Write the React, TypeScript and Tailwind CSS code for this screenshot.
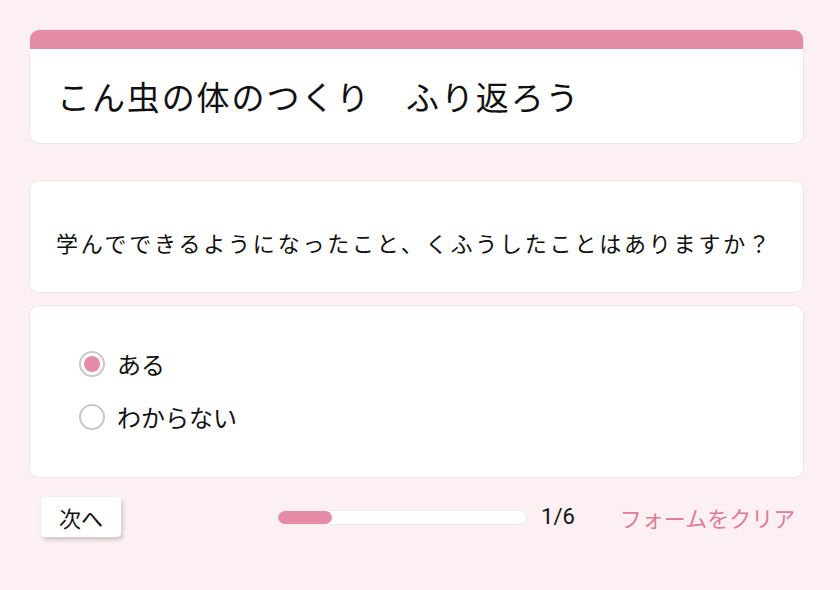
const jp = { fontFamily: '"Noto Sans CJK JP", "Noto Sans", sans-serif' };

function Radio({ checked }: { checked: boolean }) {
  return (
    <span className="flex h-[26px] w-[26px] shrink-0 items-center justify-center rounded-full border-2 border-[#c8c8c8] bg-white">
      {checked && <span className="h-[16px] w-[16px] rounded-full bg-[#e48ca5]" />}
    </span>
  );
}

export default function App() {
  const options = [
    { label: 'ある', checked: true },
    { label: 'わからない', checked: false },
  ];
  const step = 1;
  const total = 6;

  return (
    <div className="h-[590px] w-[840px] bg-[#fcf0f3] px-[29px] pt-[29px] text-[#111]" style={jp}>
      {/* Title */}
      <div className="w-[775px] overflow-hidden rounded-[10px] border border-[#ebe6e8] bg-white">
        <div className="h-[19px] bg-[#e48ca5]" />
        <div className="flex h-[94px] items-center pl-[27px]">
          <h1 className="text-[33px] leading-none tracking-[1.9px]">こん虫の体のつくり　ふり返ろう</h1>
        </div>
      </div>

      {/* Question */}
      <div className="mt-[36px] flex h-[113px] w-[775px] items-center rounded-[10px] border border-[#ebe6e8] bg-white pl-[26px] pt-[10px]">
        <p className="text-[22px] leading-none tracking-[2.8px]">
          学んでできるようになったこと、くふうしたことはありますか？
        </p>
      </div>

      {/* Options */}
      <div className="mt-[12px] flex h-[173px] w-[775px] flex-col gap-[27px] rounded-[10px] border border-[#ebe6e8] bg-white pl-[49px] pt-[45px]">
        {options.map((o) => (
          <label key={o.label} className="flex items-center gap-[12px]">
            <Radio checked={o.checked} />
            <span className="text-[24px] leading-none">{o.label}</span>
          </label>
        ))}
      </div>

      {/* Footer */}
      <div className="mt-[19px] flex items-center">
        <button className="ml-[12px] flex h-[40px] w-[80px] items-center justify-center rounded-[4px] bg-white text-[22px] leading-none shadow-[2px_3px_4px_rgba(0,0,0,0.18)]">
          次へ
        </button>
        <div className="ml-[156px] h-[15px] w-[250px] overflow-hidden rounded-full border border-[#eee] bg-white">
          <div className="h-full rounded-full bg-[#e48ca5]" style={{ width: `${(step / total) * 100 + 5}%` }} />
        </div>
        <span className="ml-[14px] text-[22px] leading-none" style={{ fontFamily: 'Roboto, "Noto Sans", sans-serif' }}>
          {step}/{total}
        </span>
        <span className="ml-[45px] text-[22px] leading-none text-[#e07c9c]">フォームをクリア</span>
      </div>
    </div>
  );
}
